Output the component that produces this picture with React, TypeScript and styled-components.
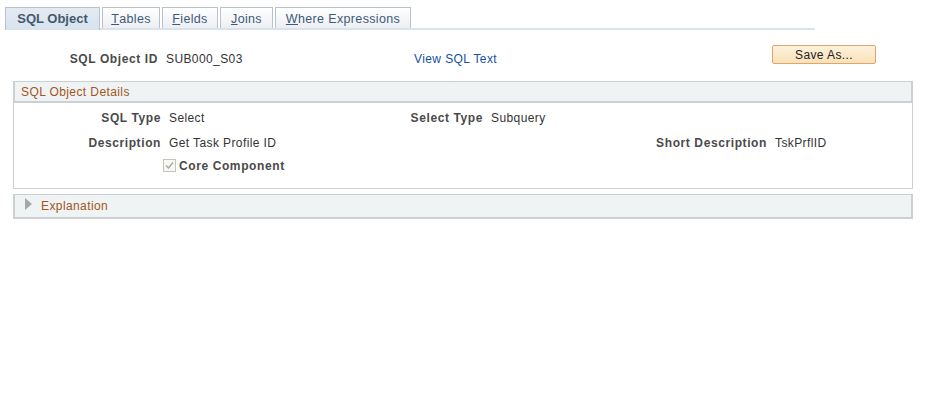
import React from "react";
import styled, { createGlobalStyle } from "styled-components";

const GlobalStyle = createGlobalStyle`
  html, body { margin: 0; padding: 0; background: #ffffff; }
  body {
    font-family: "Liberation Sans", Arial, sans-serif;
    font-size: 12px;
    letter-spacing: 0.4px;
    color: #333333;
  }
  * { box-sizing: border-box; }
`;

const Page = styled.div`
  padding-top: 5px;
  width: 926px;
`;

const TabBar = styled.div`
  display: flex;
  align-items: flex-end;
  gap: 2px;
  margin-left: 5px;
  width: 810px;
  height: 25px;
  border-bottom: 2px solid #d8e3ee;
`;

const Tab = styled.div<{ $active?: boolean; $w: number }>`
  display: flex;
  align-items: center;
  justify-content: center;
  width: ${(p) => p.$w}px;
  height: ${(p) => (p.$active ? "23px" : "21px")};
  margin-bottom: ${(p) => (p.$active ? "-2px" : "0")};
  border: 1px solid ${(p) => (p.$active ? "#b4c2d3" : "#b9c2cc")};
  border-bottom: none;
  background: ${(p) =>
    p.$active
      ? "linear-gradient(#e4eaf2, #d8e3ee)"
      : "linear-gradient(#ffffff, #eceff3)"};
  color: ${(p) => (p.$active ? "#45596f" : "#3e5a78")};
  font-size: ${(p) => (p.$active ? "13px" : "12.5px")};
  font-weight: ${(p) => (p.$active ? "bold" : "normal")};
  letter-spacing: ${(p) => (p.$active ? "0" : "0.35px")};
  white-space: nowrap;
  padding-top: ${(p) => (p.$active ? "0" : "1px")};
  padding-bottom: ${(p) => (p.$active ? "2px" : "0")};
`;

const Key = styled.span`
  text-decoration: underline;
`;

const Content = styled.div`
  padding: 0 13px;
`;

const HeaderRow = styled.div`
  display: grid;
  grid-template-columns: 145px 240px 350px 104px;
  column-gap: 8px;
  height: 21px;
  margin-top: 15px;
`;

const Label = styled.span`
  font-weight: bold;
  color: #4a4a4a;
  letter-spacing: 0.6px;
  text-align: right;
  white-space: nowrap;
  line-height: 14px;
  align-self: end;
`;

const Value = styled.span`
  color: #333333;
  white-space: nowrap;
  line-height: 14px;
  align-self: end;
`;

const Link = styled.a`
  color: #1450a0;
  text-decoration: none;
  line-height: 14px;
  align-self: end;
  white-space: nowrap;
`;

const Button = styled.button`
  align-self: start;
  height: 19px;
  width: 104px;
  padding: 0;
  border: 1px solid #e2a66a;
  border-radius: 2px;
  background: linear-gradient(#fdf1dc, #f9e2b8);
  font-family: "Liberation Sans", Arial, sans-serif;
  font-size: 12px;
  color: #222222;
  letter-spacing: 0.4px;
`;

const Group = styled.section`
  margin-top: 15px;
`;

const GroupHeader = styled.div`
  display: flex;
  align-items: center;
  height: 22px;
  padding-left: 6px;
  background: #f0f3f4;
  border: 2px solid #cbd0d5;
  border-top-width: 1px;
  color: #a3551c;
  font-size: 12px;
`;

const GroupBody = styled.div`
  display: grid;
  grid-template-columns: 147px 226px 80px 152px 116px 1fr;
  grid-auto-rows: 14px;
  row-gap: 11px;
  column-gap: 8px;
  padding: 8px 0 16px 0;
  border: 1px solid #cbd0d5;
  border-top: none;
  height: 86px;
  & > * { align-self: center; }
`;

const Spacer = styled.span``;

const CheckField = styled.label`
  display: flex;
  align-items: center;
  gap: 3px;
  margin-left: -6px;
  margin-top: -5px;
  grid-column: 2 / span 2;
  font-weight: bold;
  letter-spacing: 0.6px;
  color: #4a4a4a;
  white-space: nowrap;
`;

const CheckBox = styled.span`
  display: inline-flex;
  align-items: center;
  justify-content: center;
  width: 13px;
  height: 13px;
  border: 1px solid #c5c5bd;
  background: #f7f7f4;
`;

const Collapsed = styled.div`
  display: flex;
  align-items: center;
  gap: 9px;
  margin-top: 5px;
  height: 25px;
  padding-left: 10px;
  background: #f0f3f4;
  border: 2px solid #cbd0d5;
  border-top-width: 1px;
  color: #a3551c;
`;

const Triangle = styled.span`
  width: 0;
  height: 0;
  border-top: 6px solid transparent;
  border-bottom: 6px solid transparent;
  border-left: 7px solid #a6a6a6;
  margin-top: -4px;
`;

export default function App() {
  return (
    <>
      <GlobalStyle />
      <Page>
        <TabBar>
          <Tab $active $w={95}>
            SQL Object
          </Tab>
          <Tab $w={58}>
            <Key>T</Key>ables
          </Tab>
          <Tab $w={56}>
            <Key>F</Key>ields
          </Tab>
          <Tab $w={53}>
            <Key>J</Key>oins
          </Tab>
          <Tab $w={136}>
            <Key>W</Key>here Expressions
          </Tab>
        </TabBar>
        <Content>
          <HeaderRow>
            <Label>SQL Object ID</Label>
            <Value>SUB000_S03</Value>
            <Link href="#">View SQL Text</Link>
            <Button type="button">Save As...</Button>
          </HeaderRow>
          <Group>
            <GroupHeader>SQL Object Details</GroupHeader>
            <GroupBody>
              <Label>SQL Type</Label>
              <Value>Select</Value>
              <Label>Select Type</Label>
              <Value>Subquery</Value>
              <Spacer />
              <Spacer />
              <Label>Description</Label>
              <Value>Get Task Profile ID</Value>
              <Spacer />
              <Spacer />
              <Label>Short Description</Label>
              <Value>TskPrflID</Value>
              <Spacer />
              <CheckField>
                <CheckBox>
                  <svg width="9" height="9" viewBox="0 0 9 9">
                    <path
                      d="M1 4.5 L3.5 7 L8 1.5"
                      fill="none"
                      stroke="#a8a8a0"
                      strokeWidth="1.4"
                    />
                  </svg>
                </CheckBox>
                Core Component
              </CheckField>
            </GroupBody>
          </Group>
          <Collapsed>
            <Triangle />
            Explanation
          </Collapsed>
        </Content>
      </Page>
    </>
  );
}
